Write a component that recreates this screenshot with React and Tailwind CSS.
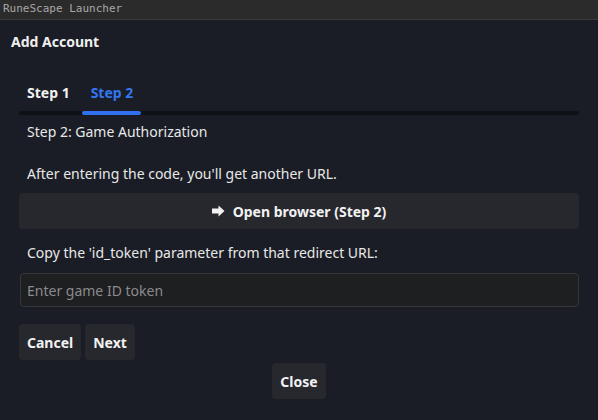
import { useState } from 'react'

function ArrowIcon() {
  return (
    <svg width="13" height="12" viewBox="0 0 13 12" className="shrink-0">
      <path d="M0 3.5h6.5V0.5L12.5 6l-6 5.5V8.5H0z" fill="#f2f2f2" />
    </svg>
  )
}

export default function App() {
  const [tab, setTab] = useState(2)
  const [token, setToken] = useState('')

  return (
    <div className="w-[598px] h-[420px] bg-[#1a1d25] text-[#e8e8e8] overflow-hidden flex flex-col" style={{ fontFamily: '"Noto Sans", sans-serif' }}>
      {/* window title */}
      <div className="h-[20px] shrink-0 bg-[#2b2b2b] border-b border-[#3a3a3c] flex items-center px-[3px] text-[11px] text-[#a8a8a8]" style={{ fontFamily: '"DejaVu Sans Mono", monospace' }}>
        RuneScape Launcher
      </div>

      <div className="flex flex-col flex-1">
        <h1 className="text-[14px] font-bold text-[#f0f0f0] pl-[11px] pt-[12px] leading-[20px]">Add Account</h1>

        <div className="px-[19px] pt-[31px]">
          {/* tabs */}
          <div className="flex">
            <button onClick={() => setTab(1)} className="relative px-[8px] pb-[8px] text-[14px] font-bold leading-[20px] text-[#f2f2f2]">
              Step 1
            </button>
            <button onClick={() => setTab(2)} className="relative ml-[5px] px-[8px] pb-[8px] text-[14px] font-bold leading-[20px] text-[#3277f0]">
              Step 2
            </button>
          </div>
          <div className="h-[4px] bg-[#0e1116] rounded-full flex">
            <div className="ml-[63px] w-[59px] h-[4px] rounded-full bg-[#2f6ff0]" />
          </div>

          <p className="text-[14px] leading-[20px] pl-[8px] pt-[7px]">Step 2: Game Authorization</p>
          <p className="text-[14px] leading-[20px] pl-[8px] pt-[22px]">After entering the code, you'll get another URL.</p>

          <button className="mt-[9px] w-full h-[36px] rounded-[4px] bg-[#27282d] flex items-center justify-center gap-[8px] text-[14px] font-bold text-[#f2f2f2]">
            <ArrowIcon />
            Open browser (Step 2)
          </button>

          <p className="text-[14px] leading-[20px] pl-[8px] pt-[14px]">Copy the 'id_token' parameter from that redirect URL:</p>

          <input
            value={token}
            onChange={(e) => setToken(e.target.value)}
            placeholder="Enter game ID token"
            className="mt-[10px] ml-[1px] w-[559px] h-[34px] rounded-[4px] bg-[#1e1f21] border border-[#35373b] px-[6px] text-[14px] text-[#e8e8e8] placeholder:text-[#8a8b8f] outline-none"
          />

          <div className="flex gap-[4px] mt-[17px]">
            <button className="h-[36px] px-[8px] rounded-[4px] bg-[#27282d] text-[14px] font-bold text-[#f2f2f2]">Cancel</button>
            <button className="h-[36px] px-[8px] rounded-[4px] bg-[#27282d] text-[14px] font-bold text-[#f2f2f2]">Next</button>
          </div>
        </div>

        <div className="flex justify-center mt-[3px]">
          <button className="h-[36px] px-[8px] rounded-[4px] bg-[#27282d] text-[14px] font-bold text-[#f2f2f2]">Close</button>
        </div>
      </div>
    </div>
  )
}
